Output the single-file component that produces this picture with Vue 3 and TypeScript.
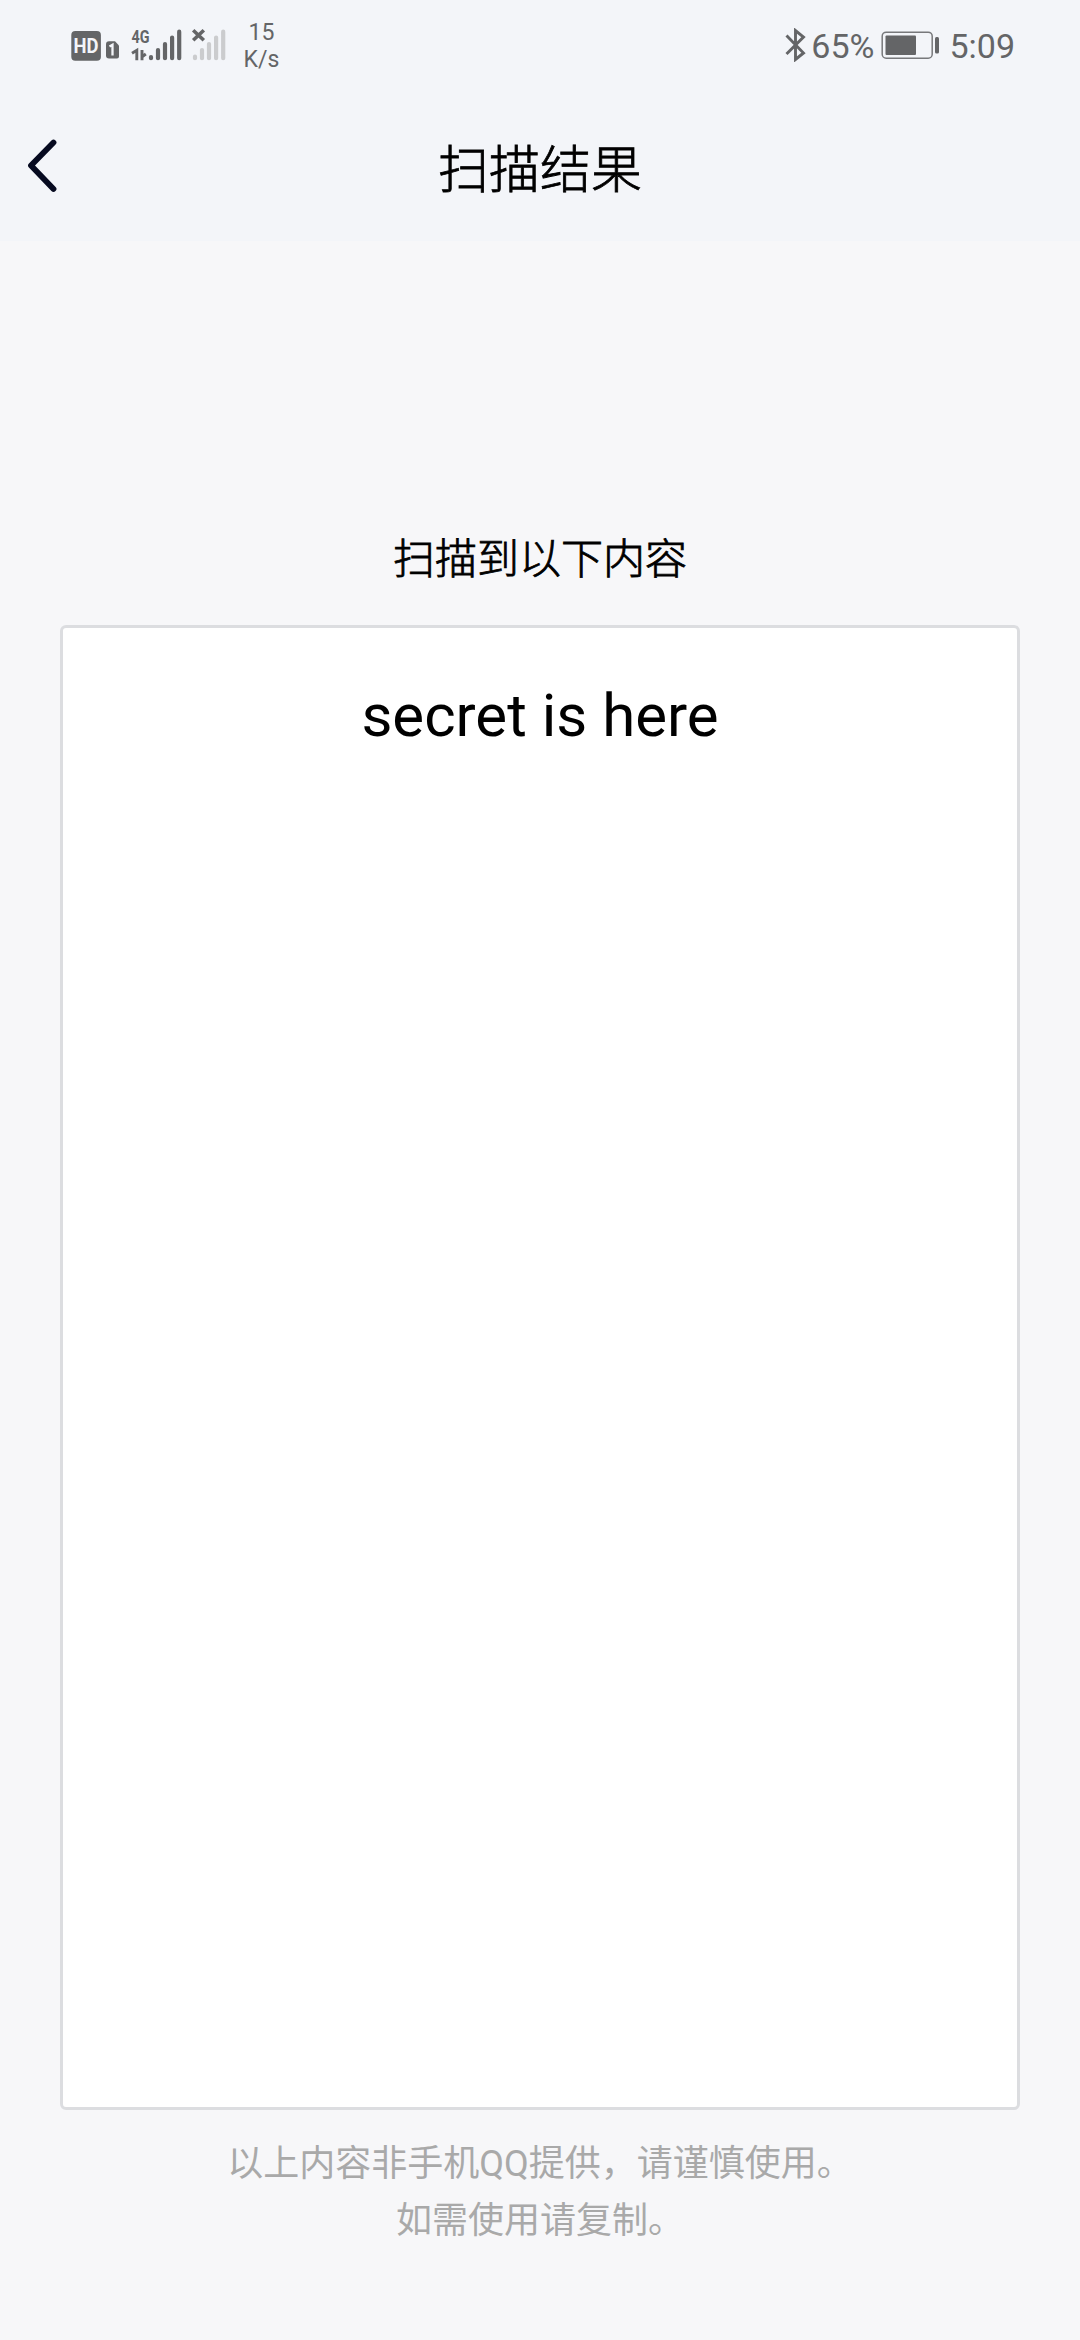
<script setup lang="ts">
const title: string = '扫描结果'
const heading: string = '扫描到以下内容'
const result: string = 'secret is here'
const notes: string[] = ['以上内容非手机QQ提供，请谨慎使用。', '如需使用请复制。']
</script>

<template>
  <div class="screen">
    <header class="top">
      <div class="status">
        <svg class="signals" width="160" height="50" viewBox="70 20 160 50">
          <rect x="71.3" y="31" width="29.6" height="29.8" rx="4" fill="#646567" />
          <text x="73.6" y="53" class="hd" textLength="25" lengthAdjust="spacingAndGlyphs">HD</text>
          <path d="M109 41.3h6l4 4.2v11a2 2 0 0 1-2 2h-8a3 3 0 0 1-3-3v-11.200a3 3 0 0 1 3-3z" fill="#646567" />
          <path d="M109.500 46.500l3-1.800v10.800" fill="none" stroke="#f3f5f9" stroke-width="2.300" />
          <text x="131.500" y="43" class="net" textLength="18" lengthAdjust="spacingAndGlyphs">4G</text>
          <path d="M132 53.300l4.800-3v10M142 50v10.300M141.800 57l4-3" fill="none" stroke="#646567" stroke-width="2.900" />
          <path d="M151 57v1.200M158 50v8.200M165 44v14.200M172.100 37.500v20.700M179.200 31.700v26.500" stroke="#646567" stroke-width="4.200" stroke-linecap="round" />
          <path d="M195 56.500v1.700M202 50v8.200M209 44v14.200M216.100 37.500v20.700M223.200 31.700v26.500" stroke="#cbccce" stroke-width="4.200" stroke-linecap="round" />
          <path d="M194.500 31.500l8 7.500M202.500 31.500l-8 7.500" stroke="#646567" stroke-width="3.600" stroke-linecap="square" />
        </svg>
        <div class="speed"><span>15</span><span>K/s</span></div>
        <div class="right">
          <svg class="bt" width="22" height="34" viewBox="0 0 22 34">
            <path d="M1.500 7.500l17 17.500-8 6.500V2.500L18.500 9 1.500 26" fill="none" stroke="#646567" stroke-width="2.900" />
          </svg>
          <span class="percent">65%</span>
          <svg class="battery" width="60" height="30" viewBox="0 0 60 30">
            <rect x="1.200" y="2.200" width="50" height="26" rx="4" fill="none" stroke="#77787b" stroke-width="1.500" />
            <rect x="4.500" y="5.500" width="30.500" height="19.500" rx="1" fill="#646567" />
            <rect x="54" y="7" width="4" height="16.500" rx="1.500" fill="#646567" />
          </svg>
          <span class="clock">5:09</span>
        </div>
      </div>
      <nav class="nav">
        <svg class="back" width="32" height="56" viewBox="0 0 32 56">
          <path d="M26.500 4.500L4 27.500 26.500 51" fill="none" stroke="#060a20" stroke-width="5.800" stroke-linecap="round" stroke-linejoin="round" />
        </svg>
        <h1 class="title">{{ title }}</h1>
      </nav>
    </header>
    <main class="body">
      <h2 class="heading">{{ heading }}</h2>
      <section class="card">{{ result }}</section>
      <footer class="notes">
        <p v-for="note in notes" :key="note">{{ note }}</p>
      </footer>
    </main>
  </div>
</template>

<style>
body {
  margin: 0;
}
</style>

<style scoped>
.screen {
  width: 1080px;
  height: 2340px;
  overflow: hidden;
  display: flex;
  flex-direction: column;
  background: #f7f7f9;
  font-family: Roboto, 'Noto Sans CJK SC', sans-serif;
  color: #000;
}
.top {
  height: 241px;
  background: #f3f5f9;
}
.status {
  height: 92px;
  box-sizing: border-box;
  padding: 20px 65px 0 70px;
  display: flex;
  align-items: flex-start;
  color: #646567;
}
.signals {
  display: block;
  flex: none;
}
.hd {
  font: 700 20px Roboto, sans-serif;
  fill: #f3f5f9;
}
.net {
  font: 700 19px Roboto, sans-serif;
  fill: #646567;
}
.speed {
  width: 63px;
  display: flex;
  flex-direction: column;
  align-items: center;
  margin-top: -1px;
  font-size: 23px;
  line-height: 27px;
}
.right {
  margin-left: auto;
  display: flex;
  align-items: flex-start;
  font-size: 34px;
  line-height: 40px;
}
.bt {
  margin: 8px 4px 0 0;
}
.percent,
.clock {
  margin-top: 6px;
}
.battery {
  margin: 10px 8px 0 7px;
}
.nav {
  height: 149px;
  display: grid;
  grid-template-columns: 120px 1fr 120px;
}
.back {
  margin: 46px 0 0 27px;
}
.title {
  margin: 41px 0 0;
  text-align: center;
  font-size: 51px;
  line-height: 76px;
  font-weight: 300;
  -webkit-text-stroke: 0.8px #000;
}
.body {
  padding: 288px 60px 0;
}
.heading {
  margin: 0;
  text-align: center;
  font-size: 42px;
  line-height: 62px;
  font-weight: 300;
  -webkit-text-stroke: 0.8px #000;
}
.card {
  margin-top: 34px;
  height: 1485px;
  box-sizing: border-box;
  border: 3px solid #dcdde0;
  border-radius: 6px;
  background: #fff;
  padding-top: 52px;
  text-align: center;
  font-size: 60px;
  line-height: 72px;
}
.notes {
  margin-top: 26px;
  text-align: center;
  color: #a9a9a9;
  font-size: 36px;
  line-height: 57px;
}
.notes p {
  margin: 0;
}
</style>
